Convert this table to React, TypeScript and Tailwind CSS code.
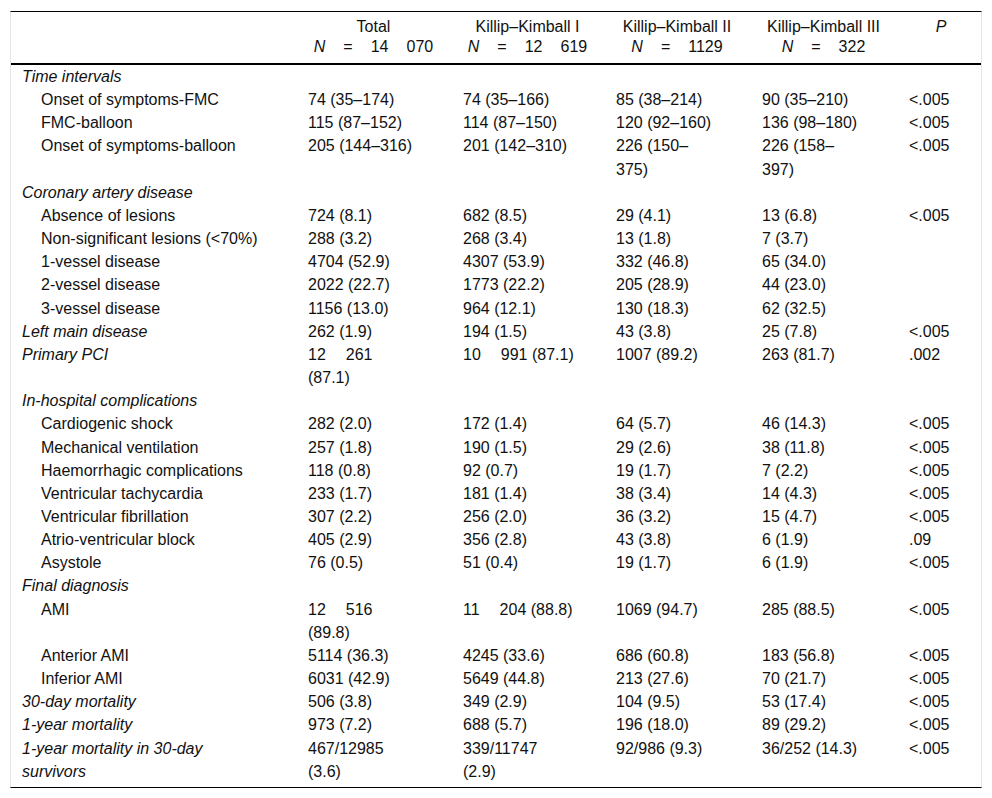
import React from "react";

type Row = {
  label: string;
  section?: boolean;
  cells?: string[];
  p?: string;
};

// "|" marks the wide gap used for thousands, "\n" a line break
const rows: Row[] = [
  { label: "Time intervals", section: true },
  { label: "Onset of symptoms-FMC", cells: ["74 (35–174)", "74 (35–166)", "85 (38–214)", "90 (35–210)"], p: "<.005" },
  { label: "FMC-balloon", cells: ["115 (87–152)", "114 (87–150)", "120 (92–160)", "136 (98–180)"], p: "<.005" },
  { label: "Onset of symptoms-balloon", cells: ["205 (144–316)", "201 (142–310)", "226 (150–\n375)", "226 (158–\n397)"], p: "<.005" },
  { label: "Coronary artery disease", section: true },
  { label: "Absence of lesions", cells: ["724 (8.1)", "682 (8.5)", "29 (4.1)", "13 (6.8)"], p: "<.005" },
  { label: "Non-significant lesions (<70%)", cells: ["288 (3.2)", "268 (3.4)", "13 (1.8)", "7 (3.7)"] },
  { label: "1-vessel disease", cells: ["4704 (52.9)", "4307 (53.9)", "332 (46.8)", "65 (34.0)"] },
  { label: "2-vessel disease", cells: ["2022 (22.7)", "1773 (22.2)", "205 (28.9)", "44 (23.0)"] },
  { label: "3-vessel disease", cells: ["1156 (13.0)", "964 (12.1)", "130 (18.3)", "62 (32.5)"] },
  { label: "Left main disease", section: true, cells: ["262 (1.9)", "194 (1.5)", "43 (3.8)", "25 (7.8)"], p: "<.005" },
  { label: "Primary PCI", section: true, cells: ["12|261\n(87.1)", "10|991 (87.1)", "1007 (89.2)", "263 (81.7)"], p: ".002" },
  { label: "In-hospital complications", section: true },
  { label: "Cardiogenic shock", cells: ["282 (2.0)", "172 (1.4)", "64 (5.7)", "46 (14.3)"], p: "<.005" },
  { label: "Mechanical ventilation", cells: ["257 (1.8)", "190 (1.5)", "29 (2.6)", "38 (11.8)"], p: "<.005" },
  { label: "Haemorrhagic complications", cells: ["118 (0.8)", "92 (0.7)", "19 (1.7)", "7 (2.2)"], p: "<.005" },
  { label: "Ventricular tachycardia", cells: ["233 (1.7)", "181 (1.4)", "38 (3.4)", "14 (4.3)"], p: "<.005" },
  { label: "Ventricular fibrillation", cells: ["307 (2.2)", "256 (2.0)", "36 (3.2)", "15 (4.7)"], p: "<.005" },
  { label: "Atrio-ventricular block", cells: ["405 (2.9)", "356 (2.8)", "43 (3.8)", "6 (1.9)"], p: ".09" },
  { label: "Asystole", cells: ["76 (0.5)", "51 (0.4)", "19 (1.7)", "6 (1.9)"], p: "<.005" },
  { label: "Final diagnosis", section: true },
  { label: "AMI", cells: ["12|516\n(89.8)", "11|204 (88.8)", "1069 (94.7)", "285 (88.5)"], p: "<.005" },
  { label: "Anterior AMI", cells: ["5114 (36.3)", "4245 (33.6)", "686 (60.8)", "183 (56.8)"], p: "<.005" },
  { label: "Inferior AMI", cells: ["6031 (42.9)", "5649 (44.8)", "213 (27.6)", "70 (21.7)"], p: "<.005" },
  { label: "30-day mortality", section: true, cells: ["506 (3.8)", "349 (2.9)", "104 (9.5)", "53 (17.4)"], p: "<.005" },
  { label: "1-year mortality", section: true, cells: ["973 (7.2)", "688 (5.7)", "196 (18.0)", "89 (29.2)"], p: "<.005" },
  { label: "1-year mortality in 30-day\nsurvivors", section: true, cells: ["467/12985\n(3.6)", "339/11747\n(2.9)", "92/986 (9.3)", "36/252 (14.3)"], p: "<.005" },
];

const headers = [
  { title: "Total", n: ["14", "070"] },
  { title: "Killip–Kimball I", n: ["12", "619"] },
  { title: "Killip–Kimball II", n: ["1129"] },
  { title: "Killip–Kimball III", n: ["322"] },
];

function CellText({ text }: { text: string }): React.ReactElement {
  const lines = text.split("\n");
  return (
    <>
      {lines.map((line, i) => (
        <div key={i} className="whitespace-nowrap">
          {line.split("|").map((part, j) => (
            <React.Fragment key={j}>
              {j > 0 && <span className="inline-block w-[20px]" />}
              {part}
            </React.Fragment>
          ))}
        </div>
      ))}
    </>
  );
}

export default function App(): React.ReactElement {
  return (
    <div className="min-h-[798px] bg-white pt-[11px] pl-[10px] font-['Liberation_Sans',Arial,sans-serif] text-[16px] text-[#111]">
      <div className="w-[972px] border-t border-b border-l border-r border-t-black border-b-black border-l-[#e4e4e4] border-r-[#e4e4e4]">
        <table className="w-[970px] table-fixed border-collapse">
          <colgroup>
            <col className="w-[289px]" />
            <col className="w-[155px]" />
            <col className="w-[153px]" />
            <col className="w-[146px]" />
            <col className="w-[147px]" />
            <col className="w-[80px]" />
          </colgroup>
          <thead>
            <tr className="border-b-2 border-black align-top leading-[20px]">
              <th className="pt-[5px] pb-[6px]" />
              {headers.map((h) => (
                <th key={h.title} className="pt-[5px] pb-[6px] pl-[2px] pr-[10px] text-center font-normal">
                  <div className="whitespace-nowrap">{h.title}</div>
                  <div className="whitespace-nowrap">
                    <span className="italic">N</span>
                    <span className="inline-block w-[18px]" />=
                    {h.n.map((part) => (
                      <React.Fragment key={part}>
                        <span className="inline-block w-[18px]" />
                        {part}
                      </React.Fragment>
                    ))}
                  </div>
                </th>
              ))}
              <th className="pt-[5px] pb-[6px] text-center font-normal italic">P</th>
            </tr>
          </thead>
          <tbody className="leading-[23.15px]">
            {rows.map((row, idx) => {
              const last = idx === rows.length - 1;
              const pad = last ? "pb-[4px]" : "";
              return (
                <tr key={row.label} className="align-top">
                  <td className={`${row.section ? "pl-[11px] italic" : "pl-[30px]"} ${pad}`}>
                    <CellText text={row.label} />
                  </td>
                  {[0, 1, 2, 3].map((c) => (
                    <td key={c} className={`pl-[8px] ${pad}`}>
                      {row.cells ? <CellText text={row.cells[c]} /> : null}
                    </td>
                  ))}
                  <td className={`pl-[8px] ${pad}`}>{row.p ?? ""}</td>
                </tr>
              );
            })}
          </tbody>
        </table>
      </div>
    </div>
  );
}
